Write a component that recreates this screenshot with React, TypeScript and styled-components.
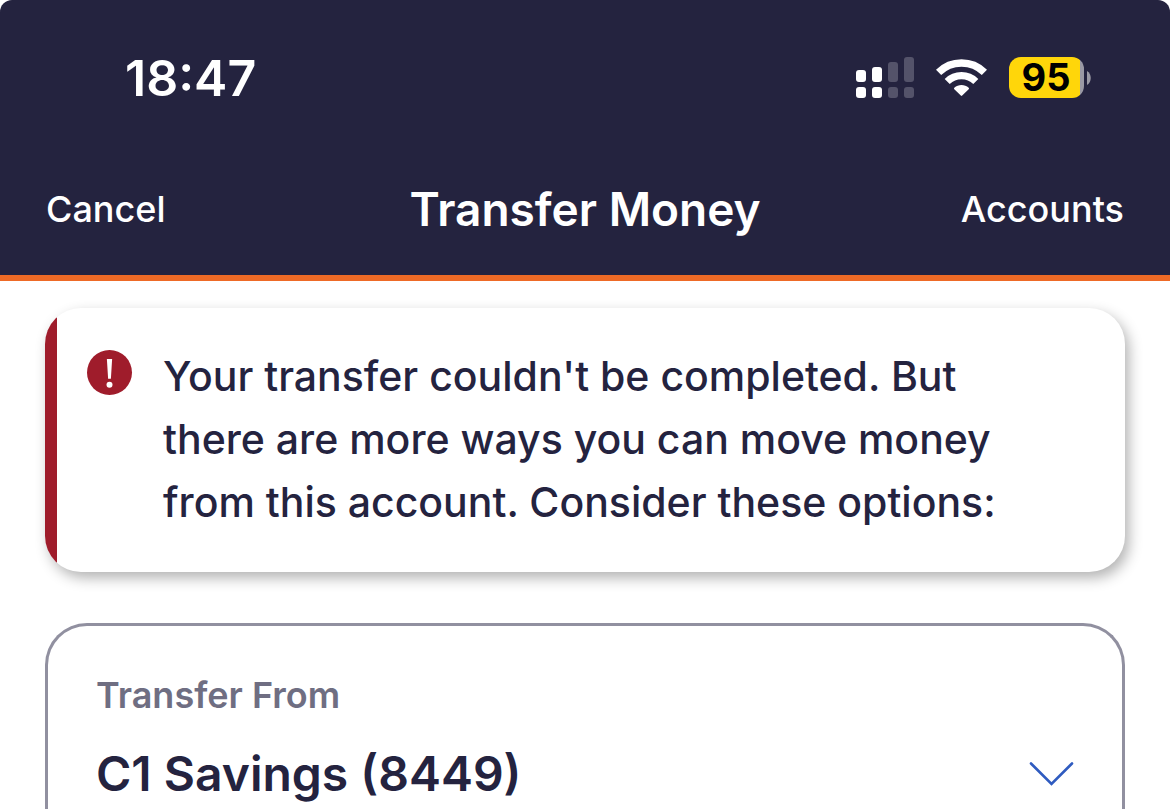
import React from "react";
import styled, { createGlobalStyle } from "styled-components";

const navy = "#24233f";

const GlobalStyle = createGlobalStyle`
  * {
    box-sizing: border-box;
  }
  body {
    margin: 0;
    background: #ffffff;
    color: ${navy};
    font-family: Inter, "Liberation Sans", sans-serif;
  }
`;

const Screen = styled.div`
  display: flex;
  flex-direction: column;
  height: 100vh;
  overflow: hidden;
`;

const Header = styled.header`
  flex: none;
  border-bottom: 6px solid #ee6a26;
  border-radius: 12px 12px 0 0;
  background: ${navy};
  color: #ffffff;
`;

const StatusBar = styled.div`
  display: flex;
  align-items: center;
  justify-content: space-between;
  padding: 48px 79px 0 125px;
`;

const Time = styled.time`
  font-size: 50px;
  font-weight: 600;
  line-height: 60px;
`;

const StatusIcons = styled.div`
  display: flex;
  align-items: flex-start;
  gap: 22px;
`;

const Battery = styled.div`
  display: flex;
  align-items: center;
  gap: 3px;
`;

const BatteryBody = styled.div`
  width: 75px;
  border-radius: 12px;
  background: linear-gradient(to right, #ffd60a 71px, #9a99a4 71px);
  padding-right: 1px;
  color: #000000;
  font-size: 38px;
  font-weight: 700;
  line-height: 41px;
  text-align: center;
`;

const NavBar = styled.nav`
  display: grid;
  grid-template-columns: 1fr auto 1fr;
  align-items: center;
  padding: 69px 46px 34px;
`;

const NavButton = styled.button<{ $end?: boolean }>`
  justify-self: ${({ $end }) => ($end ? "end" : "start")};
  border: 0;
  background: none;
  padding: 0;
  color: inherit;
  font: inherit;
  font-size: 36px;
  font-weight: 500;
  line-height: 64px;
`;

const Title = styled.h1`
  margin: 0;
  font-size: 46px;
  font-weight: 600;
  line-height: 64px;
`;

const Content = styled.main`
  display: flex;
  flex: 1;
  flex-direction: column;
  gap: 51px;
  padding: 27px 45px 0;
`;

const Alert = styled.section`
  display: flex;
  overflow: hidden;
  border-radius: 36px;
  background: #ffffff;
  box-shadow: 4px 6px 14px rgba(0, 0, 0, 0.3);
`;

const AlertAccent = styled.div`
  flex: none;
  width: 12px;
  background: #9f1c2b;
`;

const AlertBody = styled.div`
  display: flex;
  flex: 1;
  align-items: flex-start;
  gap: 30px;
  padding: 37px 96px 38px 30px;
`;

const AlertIcon = styled.svg`
  flex: none;
  margin-top: 5px;
`;

const AlertText = styled.p`
  margin: 0;
  font-size: 41px;
  font-weight: 500;
  line-height: 63px;
`;

const AccountField = styled.div`
  display: flex;
  flex: 1;
  flex-direction: column;
  border: 3px solid #9190a0;
  border-bottom: 0;
  border-radius: 42px 42px 0 0;
  padding: 47px 48px 0;
`;

const FieldLabel = styled.label`
  color: #6f6e82;
  font-size: 36px;
  font-weight: 600;
  line-height: 44px;
`;

const SelectRow = styled.div`
  display: grid;
  align-items: center;
  margin-top: 24px;

  > * {
    grid-area: 1 / 1;
  }
`;

const AccountSelect = styled.select`
  width: 100%;
  height: 66px;
  appearance: none;
  border: 0;
  background: none;
  padding: 0;
  color: ${navy};
  font: inherit;
  font-size: 48px;
  font-weight: 600;
  line-height: 66px;
`;

const Chevron = styled.svg`
  justify-self: end;
  pointer-events: none;
`;

function SignalIcon() {
  return (
    <svg width="58" height="42" viewBox="0 0 58 42" aria-hidden="true">
      <g fill="#ffffff">
        <rect x="0" y="13" width="10" height="12" rx="3" />
        <rect x="16" y="10" width="10" height="15" rx="3" />
        <rect x="0" y="30" width="10" height="11" rx="3" />
        <rect x="16" y="30" width="10" height="11" rx="3" />
      </g>
      <g fill="#54536a">
        <rect x="32" y="5" width="10" height="20" rx="3" />
        <rect x="48" y="0" width="10" height="25" rx="3" />
        <rect x="32" y="30" width="10" height="11" rx="3" />
        <rect x="48" y="30" width="10" height="11" rx="3" />
      </g>
    </svg>
  );
}

function WifiIcon() {
  return (
    <svg width="51" height="42" viewBox="0 -2 51 42" aria-hidden="true">
      <g fill="none" stroke="#ffffff">
        <path d="M2.6 13.4A32.6 32.6 0 0 1 48.4 13.4" strokeWidth="7.4" />
        <path d="M11.2 22.5A20.4 20.4 0 0 1 39.8 22.5" strokeWidth="7.2" />
      </g>
      <path
        d="M18.3 28.8C22.3 25 28.7 25 32.7 28.8C33.2 29.3 33.2 29.7 32.7 30.2L26.2 36.6C25.7 37.1 25.3 37.1 24.8 36.6L18.3 30.2C17.8 29.7 17.8 29.3 18.3 28.8Z"
        fill="#ffffff"
      />
    </svg>
  );
}

export default function App() {
  return (
    <Screen>
      <GlobalStyle />
      <Header>
        <StatusBar>
          <Time>18:47</Time>
          <StatusIcons>
            <SignalIcon />
            <WifiIcon />
            <Battery>
              <BatteryBody>95</BatteryBody>
              <svg width="4" height="14" viewBox="0 0 4 14" aria-hidden="true">
                <path d="M0 0C5 3 5 11 0 14Z" fill="#9a99a4" />
              </svg>
            </Battery>
          </StatusIcons>
        </StatusBar>
        <NavBar>
          <NavButton type="button">Cancel</NavButton>
          <Title>Transfer Money</Title>
          <NavButton type="button" $end>
            Accounts
          </NavButton>
        </NavBar>
      </Header>
      <Content>
        <Alert role="alert">
          <AlertAccent />
          <AlertBody>
            <AlertIcon width="46" height="46" viewBox="0 0 46 46" aria-hidden="true">
              <circle cx="22.5" cy="22.5" r="22.5" fill="#9f1c2b" />
              <path d="M19.9 9H25.1L23.9 28.8H21.1Z" fill="#ffffff" />
              <circle cx="22.5" cy="34.7" r="3" fill="#ffffff" />
            </AlertIcon>
            <AlertText>
              Your transfer couldn't be completed. But there are more ways you can move money from
              this account. Consider these options:
            </AlertText>
          </AlertBody>
        </Alert>
        <AccountField>
          <FieldLabel htmlFor="from-account">Transfer From</FieldLabel>
          <SelectRow>
            <AccountSelect id="from-account" defaultValue="8449">
              <option value="8449">C1 Savings (8449)</option>
            </AccountSelect>
            <Chevron width="45" height="26" viewBox="0 0 45 26" aria-hidden="true">
              <path
                d="M2 2.5L22.5 23L43 2.5"
                fill="none"
                stroke="#2f5bc0"
                strokeWidth="2.6"
                strokeLinecap="round"
              />
            </Chevron>
          </SelectRow>
        </AccountField>
      </Content>
    </Screen>
  );
}
